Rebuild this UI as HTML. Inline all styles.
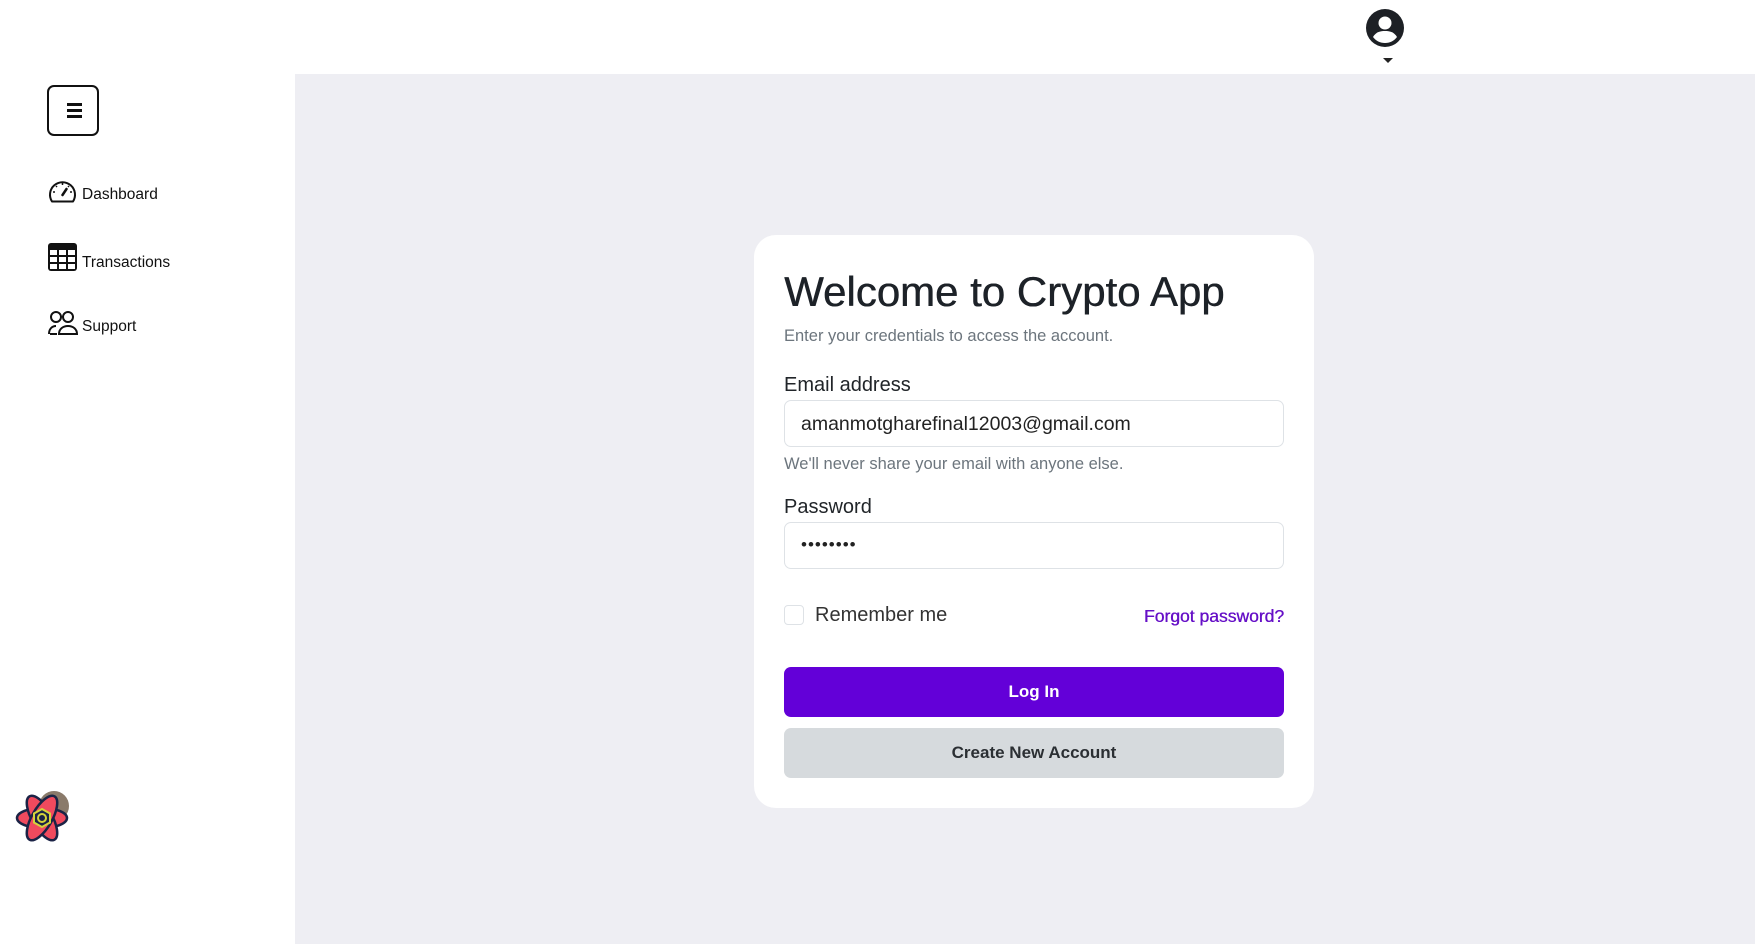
<!DOCTYPE html>
<html><head><meta charset="utf-8"><style>
*{box-sizing:border-box;margin:0;padding:0}
body{width:1755px;height:944px;background:#fff;font-family:"Liberation Sans",sans-serif;position:relative;overflow:hidden;color:#212529}
.main{position:absolute;left:295px;top:74px;right:0;bottom:0;background:#eeeef3}
.ham{position:absolute;left:47px;top:85px;width:52px;height:51px;border:2px solid #111;border-radius:7px}
.ham i{position:absolute;left:18px;width:15px;height:2.5px;background:#111}
.nav{position:absolute;left:47px;display:flex;align-items:flex-end;font-size:15.5px;color:#111}
.nav svg{margin-right:4px}
.card{position:absolute;left:754px;top:235px;width:560px;height:573px;background:#fff;border-radius:22px}
.abs{position:absolute;left:30px}
h1{position:absolute;left:30px;top:33px;font-size:42px;font-weight:normal;color:#1d2228;text-shadow:0.5px 0 0 #1d2228}
.inp{position:absolute;left:30px;width:500px;height:47px;border:1px solid #dee2e6;border-radius:7px;font-size:19.5px;padding:12px 16px;color:#222}
.btn{position:absolute;left:30px;width:500px;height:50px;border-radius:7px;text-align:center;line-height:50px;font-size:17px;font-weight:bold}
</style></head><body>
<div class="main"></div>
<svg style="position:absolute;left:1365px;top:8px" width="40" height="40" viewBox="0 0 40 40"><circle cx="20" cy="20" r="19" fill="#1d2025"/><circle cx="20" cy="15" r="6.5" fill="#fff"/><path d="M8 29c3-5 7-6 12-6s9 1 12 6c-3 4-7 6-12 6s-9-2-12-6z" fill="#fff"/></svg>
<div style="position:absolute;left:1383px;top:58px;border:5px solid transparent;border-top:5px solid #222;border-bottom:0"></div>
<div class="ham"><i style="top:16px"></i><i style="top:22px"></i><i style="top:28px"></i></div>
<div class="nav" style="top:178px"><svg width="31" height="26" viewBox="0 0 31 26" fill="none" stroke="#111" stroke-width="2"><path d="M5 23.5a12.5 12.5 0 1 1 21 0z" stroke-linejoin="round"/><path d="M15.5 17l4-6" stroke-width="2.5" stroke-linecap="round"/><path d="M6 14h2M23 14h2M9 8l1 1M15.5 5v2M22 8l-1 1" stroke-width="1.5"/></svg>Dashboard</div>
<div class="nav" style="top:242px"><svg width="31" height="30" viewBox="0 0 31 30"><rect x="1" y="1" width="29" height="28" rx="3" fill="#111"/><g fill="#fff"><rect x="3" y="8" width="7" height="5"/><rect x="12" y="8" width="7" height="5"/><rect x="21" y="8" width="7" height="5"/><rect x="3" y="15" width="7" height="5"/><rect x="12" y="15" width="7" height="5"/><rect x="21" y="15" width="7" height="5"/><rect x="3" y="22" width="7" height="5"/><rect x="12" y="22" width="7" height="5"/><rect x="21" y="22" width="7" height="5"/></g></svg>Transactions</div>
<div class="nav" style="top:310px"><svg width="31" height="26" viewBox="0 0 31 26" fill="none" stroke="#111" stroke-width="2"><circle cx="9" cy="7" r="5"/><circle cx="21" cy="7" r="5"/><path d="M2 24c0-5 3-8 7-8M3 24h7M12 24c0-5 4-8 9-8s9 3 9 8z"/></svg>Support</div>
<svg style="position:absolute;left:14px;top:788px" width="58" height="56" viewBox="0 0 58 56"><circle cx="40" cy="18" r="15" fill="#8a7a6a"/><g fill="#f04a5e" stroke="#1b2346" stroke-width="2.5"><ellipse cx="28" cy="30" rx="25" ry="10"/><ellipse cx="28" cy="30" rx="25" ry="10" transform="rotate(60 28 30)"/><ellipse cx="28" cy="30" rx="25" ry="10" transform="rotate(-60 28 30)"/></g><polygon points="28,21 36,25.5 36,34.5 28,39 20,34.5 20,25.5" fill="#1b2346" stroke="#d4d43a" stroke-width="2"/><circle cx="28" cy="30" r="4" fill="none" stroke="#d4d43a" stroke-width="2"/></svg>
<div class="card">
<h1>Welcome to Crypto App</h1>
<div class="abs" style="top:92px;font-size:16.5px;color:#6c757d">Enter your credentials to access the account.</div>
<div class="abs" style="top:139px;font-size:20px;color:#212529">Email address</div>
<div class="inp" style="top:165px">amanmotgharefinal12003@gmail.com</div>
<div class="abs" style="top:220px;font-size:16.5px;color:#6c757d">We'll never share your email with anyone else.</div>
<div class="abs" style="top:261px;font-size:20px">Password</div>
<div class="inp" style="top:287px;font-size:17px;letter-spacing:1px">••••••••</div>
<div class="abs" style="top:370px;width:20px;height:20px;border:1px solid #dee2e6;border-radius:4px"></div>
<div class="abs" style="left:61px;top:369px;font-size:20px;color:#333">Remember me</div>
<div style="position:absolute;right:30px;top:371px;font-size:17.5px;color:#6610c7;text-shadow:0.4px 0 0 #6610c7">Forgot password?</div>
<div class="btn" style="top:432px;background:#6300d8;color:#fff">Log In</div>
<div class="btn" style="top:493px;background:#d6dadd;color:#2b2f33">Create New Account</div>
</div>
</body></html>
